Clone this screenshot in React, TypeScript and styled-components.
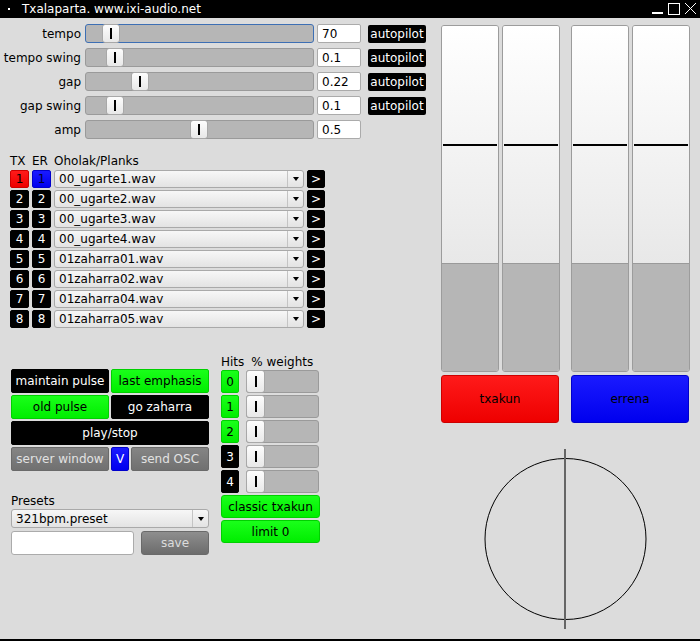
import React from 'react';
import styled, { createGlobalStyle } from 'styled-components';

const Global = createGlobalStyle`
  html, body { margin: 0; padding: 0; background: #dcdcdc; }
  body { font-family: "DejaVu Sans", "Liberation Sans", sans-serif; font-size: 12px; color: #000; }
  * { box-sizing: border-box; }
  button, input { font: inherit; }
`;

type Tone = 'black' | 'green' | 'gray' | 'blue' | 'red' | 'blueMark';

const tones: Record<Tone, { bg: string; fg: string; border: string }> = {
  black: { bg: '#000', fg: '#fff', border: '#000' },
  green: { bg: 'linear-gradient(#1aff1a, #00ee00)', fg: '#000', border: '#00d000' },
  gray: { bg: 'linear-gradient(#858585, #707070)', fg: '#e2e2e2', border: '#6a6a6a' },
  blue: { bg: 'linear-gradient(#1a1aff, #0000ee)', fg: '#fff', border: '#0000cc' },
  blueMark: { bg: 'linear-gradient(#1a1aff, #0000ee)', fg: '#000030', border: '#0000cc' },
  red: { bg: 'linear-gradient(#ff1a1a, #ee0000)', fg: '#000', border: '#cc0000' },
};

const Window = styled.div`
  width: 700px;
  height: 641px;
  background: #dcdcdc;
  display: flex;
  flex-direction: column;
  border-bottom: 2px solid #000;
  overflow: hidden;
`;

const TitleBar = styled.div`
  height: 18px;
  flex-shrink: 0;
  background: #000;
  color: #fff;
  display: flex;
  align-items: center;
  padding-left: 8px;
`;

const TitleDot = styled.span`
  width: 2px;
  height: 2px;
  background: #fff;
  margin-right: 12px;
`;

const TitleText = styled.span`
  flex: 1;
  white-space: nowrap;
`;

const WinControls = styled.svg`
  margin-right: 2px;
  display: block;
`;

const Main = styled.div`
  flex: 1;
  display: flex;
  padding-top: 6px;
`;

const LeftColumn = styled.div`
  width: 441px;
  display: flex;
  flex-direction: column;
`;

const RightColumn = styled.div`
  width: 249px;
  margin-top: 1px;
  display: flex;
  flex-direction: column;
`;

/* ---------- slider rows ---------- */

const SliderList = styled.div`
  display: flex;
  flex-direction: column;
  gap: 5px;
`;

const SliderRow = styled.div`
  display: flex;
  align-items: center;
  height: 19px;
`;

const RowLabel = styled.span`
  width: 81px;
  margin-right: 4px;
  text-align: right;
  white-space: nowrap;
`;

const Groove = styled.div<{ $w: number; $h: number; $focus?: boolean }>`
  position: relative;
  width: ${(p) => p.$w}px;
  height: ${(p) => p.$h}px;
  background: #b6b6b6;
  border: 1px solid ${(p) => (p.$focus ? '#3d6fb4' : '#9a9a9a')};
  border-radius: 3px;
  flex-shrink: 0;
`;

const Handle = styled.div<{ $w: number }>`
  position: absolute;
  top: -1px;
  bottom: -1px;
  width: ${(p) => p.$w}px;
  background: linear-gradient(#fdfdfd, #e8e8e8);
  border: 1px solid #a8a8a8;
  border-radius: 3px;
  display: flex;
  align-items: center;
  justify-content: center;
  &::after {
    content: '';
    width: 2px;
    height: 11px;
    background: #000;
  }
`;

const NumberBox = styled.div`
  width: 44px;
  height: 19px;
  margin-left: 3px;
  background: #fff;
  border: 1px solid #ababab;
  border-radius: 2px;
  padding-left: 4px;
  display: flex;
  align-items: center;
`;

const Autopilot = styled.button`
  width: 58px;
  height: 18px;
  margin-left: 7px;
  padding: 0;
  background: #000;
  color: #fff;
  border: none;
  border-radius: 2px;
  display: flex;
  align-items: center;
  justify-content: center;
`;

/* ---------- planks ---------- */

const PlankGrid = styled.div`
  margin-top: 15px;
  padding-left: 10px;
  display: grid;
  grid-template-columns: 19px 19px 250px 18px;
  grid-auto-rows: 18px;
  grid-template-rows: 14px;
  column-gap: 3px;
  row-gap: 2px;
`;

const HeadCell = styled.span<{ $span?: number }>`
  grid-column: span ${(p) => p.$span ?? 1};
  line-height: 15px;
  white-space: nowrap;
`;

const Pad = styled.button<{ $tone: Tone; $radius?: number }>`
  padding: 0;
  margin: 0;
  width: 100%;
  height: 100%;
  background: ${(p) => tones[p.$tone].bg};
  color: ${(p) => tones[p.$tone].fg};
  border: 1px solid ${(p) => tones[p.$tone].border};
  border-radius: ${(p) => p.$radius ?? 2}px;
  display: flex;
  align-items: center;
  justify-content: center;
  white-space: nowrap;
`;

const Combo = styled.div<{ $h?: number }>`
  height: ${(p) => p.$h ?? 18}px;
  background: linear-gradient(#f7f7f7, #e3e3e3);
  border: 1px solid #a9a9a9;
  border-radius: 3px;
  display: flex;
  align-items: stretch;
`;

const ComboText = styled.span`
  flex: 1;
  padding-left: 4px;
  display: flex;
  align-items: center;
  white-space: nowrap;
`;

const ComboArrow = styled.span`
  width: 16px;
  border-left: 1px solid #c4c4c4;
  display: flex;
  align-items: center;
  justify-content: center;
  &::after {
    content: '';
    border-left: 3.5px solid transparent;
    border-right: 3.5px solid transparent;
    border-top: 4px solid #000;
  }
`;

/* ---------- bottom section ---------- */

const BottomSection = styled.div`
  margin-top: 27px;
  padding-left: 11px;
  display: flex;
  gap: 12px;
`;

const ControlColumn = styled.div`
  width: 198px;
  margin-top: 14px;
  display: flex;
  flex-direction: column;
`;

const ButtonGrid = styled.div`
  display: grid;
  grid-template-columns: 98px 98px;
  grid-auto-rows: 24px;
  gap: 2px;
`;

const WideCell = styled.div`
  grid-column: span 2;
`;

const ServerRow = styled.div`
  grid-column: span 2;
  display: grid;
  grid-template-columns: 98px 18px 78px;
  gap: 2px;
`;

const PresetLabel = styled.div`
  margin-top: 23px;
  line-height: 14px;
`;

const PresetCombo = styled(Combo)`
  margin-top: 1px;
`;

const SaveRow = styled.div`
  margin-top: 3px;
  display: flex;
  gap: 7px;
  height: 24px;
`;

const NameInput = styled.input`
  width: 123px;
  height: 24px;
  background: #fff;
  border: 1px solid #ababab;
  border-radius: 3px;
  outline: none;
  padding: 0 4px;
`;

const SaveButton = styled.button`
  width: 68px;
  height: 24px;
  padding: 0;
  background: linear-gradient(#8e8e8e, #6c6c6c);
  color: #dcdcdc;
  border: 1px solid #6a6a6a;
  border-radius: 3px;
`;

const HitsColumn = styled.div`
  width: 99px;
  display: flex;
  flex-direction: column;
  gap: 2px;
`;

const HitsHeader = styled.div`
  height: 13px;
  line-height: 15px;
  display: flex;
  white-space: nowrap;
`;

const WeightsTitle = styled.span`
  margin-left: 7px;
`;

const HitRow = styled.div`
  height: 23px;
  display: flex;
  gap: 7px;
`;

const HitPad = styled.div`
  width: 18px;
  flex-shrink: 0;
`;

const HitButton = styled.div`
  height: 23px;
`;

/* ---------- meters ---------- */

const MeterGroups = styled.div`
  display: flex;
  gap: 11px;
`;

const MeterGroup = styled.div`
  width: 119px;
  display: flex;
  flex-direction: column;
  gap: 3px;
`;

const MeterPair = styled.div`
  height: 347px;
  display: flex;
  gap: 3px;
`;

const Meter = styled.div`
  width: 58px;
  height: 100%;
  border: 1px solid #9c9c9c;
  border-radius: 3px;
  overflow: hidden;
  display: flex;
  flex-direction: column;
`;

const MeterTrack = styled.div`
  position: relative;
  flex: 1;
  background: linear-gradient(#ffffff, #e8e8e8);
`;

const MeterMark = styled.div<{ $top: number }>`
  position: absolute;
  left: 1px;
  right: 1px;
  top: ${(p) => p.$top}px;
  height: 2px;
  background: #000;
`;

const MeterFill = styled.div<{ $h: number }>`
  height: ${(p) => p.$h}px;
  background: #b6b6b6;
  border-top: 1px solid #9a9a9a;
`;

const PlayerButton = styled.button<{ $tone: Tone }>`
  height: 48px;
  width: 118px;
  padding: 0;
  background: ${(p) => tones[p.$tone].bg};
  color: #000;
  border: 1px solid ${(p) => tones[p.$tone].border};
  border-radius: 3px;
`;

const Dial = styled.svg`
  margin-top: 26px;
  display: block;
`;

const sliders = [
  { label: 'tempo', value: '70', pos: 17, focus: true, auto: true },
  { label: 'tempo swing', value: '0.1', pos: 21, auto: true },
  { label: 'gap', value: '0.22', pos: 46, auto: true },
  { label: 'gap swing', value: '0.1', pos: 21, auto: true },
  { label: 'amp', value: '0.5', pos: 105, auto: false },
];

const planks = [
  '00_ugarte1.wav',
  '00_ugarte2.wav',
  '00_ugarte3.wav',
  '00_ugarte4.wav',
  '01zaharra01.wav',
  '01zaharra02.wav',
  '01zaharra04.wav',
  '01zaharra05.wav',
];

const hits: Tone[] = ['green', 'green', 'green', 'black', 'black'];

function MeterBar() {
  return (
    <Meter>
      <MeterTrack>
        <MeterMark $top={118} />
      </MeterTrack>
      <MeterFill $h={108} />
    </Meter>
  );
}

export default function App() {
  return (
    <>
      <Global />
      <Window>
        <TitleBar>
          <TitleDot />
          <TitleText>Txalaparta. www.ixi-audio.net</TitleText>
          <WinControls width="50" height="18" viewBox="0 0 50 18">
            <rect x="4" y="12" width="11" height="2" fill="#fff" />
            <rect x="20.5" y="3.5" width="11" height="11" fill="none" stroke="#fff" strokeWidth="1" />
            <path d="M37 3 L48 14 M48 3 L37 14" stroke="#fff" strokeWidth="1" />
          </WinControls>
        </TitleBar>
        <Main>
          <LeftColumn>
            <SliderList>
              {sliders.map((s) => (
                <SliderRow key={s.label}>
                  <RowLabel>{s.label}</RowLabel>
                  <Groove $w={229} $h={19} $focus={s.focus}>
                    <Handle $w={18} style={{ left: s.pos - 1 }} />
                  </Groove>
                  <NumberBox>{s.value}</NumberBox>
                  {s.auto && <Autopilot>autopilot</Autopilot>}
                </SliderRow>
              ))}
            </SliderList>

            <PlankGrid>
              <HeadCell>TX</HeadCell>
              <HeadCell>ER</HeadCell>
              <HeadCell $span={2}>Oholak/Planks</HeadCell>
              {planks.map((p, i) => (
                <React.Fragment key={p}>
                  <Pad $tone={i === 0 ? 'red' : 'black'}>{i + 1}</Pad>
                  <Pad $tone={i === 0 ? 'blueMark' : 'black'}>{i + 1}</Pad>
                  <Combo>
                    <ComboText>{p}</ComboText>
                    <ComboArrow />
                  </Combo>
                  <Pad $tone="black">&gt;</Pad>
                </React.Fragment>
              ))}
            </PlankGrid>

            <BottomSection>
              <ControlColumn>
                <ButtonGrid>
                  <Pad $tone="black">maintain pulse</Pad>
                  <Pad $tone="green">last emphasis</Pad>
                  <Pad $tone="green">old pulse</Pad>
                  <Pad $tone="black">go zaharra</Pad>
                  <WideCell>
                    <Pad $tone="black">play/stop</Pad>
                  </WideCell>
                  <ServerRow>
                    <Pad $tone="gray">server window</Pad>
                    <Pad $tone="blue">V</Pad>
                    <Pad $tone="gray">send OSC</Pad>
                  </ServerRow>
                </ButtonGrid>
                <PresetLabel>Presets</PresetLabel>
                <PresetCombo $h={19}>
                  <ComboText>321bpm.preset</ComboText>
                  <ComboArrow />
                </PresetCombo>
                <SaveRow>
                  <NameInput defaultValue="" />
                  <SaveButton>save</SaveButton>
                </SaveRow>
              </ControlColumn>

              <HitsColumn>
                <HitsHeader>
                  <span>Hits</span>
                  <WeightsTitle>% weights</WeightsTitle>
                </HitsHeader>
                {hits.map((t, i) => (
                  <HitRow key={i}>
                    <HitPad>
                      <Pad $tone={t}>{i}</Pad>
                    </HitPad>
                    <Groove $w={73} $h={23}>
                      <Handle $w={19} style={{ left: -1 }} />
                    </Groove>
                  </HitRow>
                ))}
                <HitButton>
                  <Pad $tone="green" $radius={3}>classic txakun</Pad>
                </HitButton>
                <HitButton>
                  <Pad $tone="green" $radius={3}>limit 0</Pad>
                </HitButton>
              </HitsColumn>
            </BottomSection>
          </LeftColumn>

          <RightColumn>
            <MeterGroups>
              <MeterGroup>
                <MeterPair>
                  <MeterBar />
                  <MeterBar />
                </MeterPair>
                <PlayerButton $tone="red">txakun</PlayerButton>
              </MeterGroup>
              <MeterGroup>
                <MeterPair>
                  <MeterBar />
                  <MeterBar />
                </MeterPair>
                <PlayerButton $tone="blue">errena</PlayerButton>
              </MeterGroup>
            </MeterGroups>
            <Dial width="249" height="180" viewBox="0 0 249 180">
              <circle cx="124.5" cy="90" r="80.5" fill="none" stroke="#000" strokeWidth="1" />
              <line x1="124" y1="0" x2="124" y2="180" stroke="#666" strokeWidth="2" />
            </Dial>
          </RightColumn>
        </Main>
      </Window>
    </>
  );
}
